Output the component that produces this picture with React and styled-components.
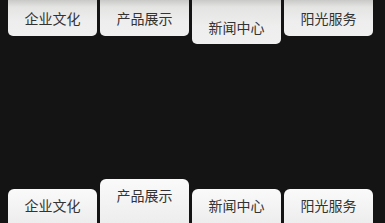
import React from 'react';
import styled, { createGlobalStyle } from 'styled-components';

const GlobalStyle = createGlobalStyle`
  html, body {
    margin: 0;
    padding: 0;
    background: #141414;
  }
`;

const Page = styled.div`
  height: 223px;
  display: flex;
  flex-direction: column;
  justify-content: space-between;
  overflow: hidden;
`;

const Bar = styled.div`
  display: flex;
  align-items: ${(p) => (p.$bottom ? 'flex-end' : 'flex-start')};
  gap: 3px;
  padding-left: 8px;
`;

const Tab = styled.div`
  width: 89px;
  box-sizing: border-box;
  display: flex;
  align-items: center;
  justify-content: center;
  font-family: "Noto Sans CJK SC", "Noto Sans", sans-serif;
  font-size: 14px;
  line-height: 16px;
  color: #333;
`;

const TopTab = styled(Tab)`
  height: ${(p) => (p.$active ? '44px' : '36px')};
  padding-top: ${(p) => (p.$active ? '11px' : '0')};
  padding-bottom: 1px;
  border-radius: 0 0 5px 5px;
  background: linear-gradient(#c9c9c7 0px, #e4e4e3 7px, #eeeeee 60%, #f0f0f0 100%);
`;

const BottomTab = styled(Tab)`
  height: ${(p) => (p.$active ? '44px' : '34px')};
  padding-bottom: ${(p) => (p.$active ? '12px' : '2px')};
  border-radius: 6px 6px 0 0;
  background: linear-gradient(#fafafa, #ededed);
`;

const tabs = ['企业文化', '产品展示', '新闻中心', '阳光服务'];

export default function App() {
  return (
    <>
      <GlobalStyle />
      <Page>
        <Bar>
          {tabs.map((t, i) => (
            <TopTab key={t} $active={i === 2}>{t}</TopTab>
          ))}
        </Bar>
        <Bar $bottom>
          {tabs.map((t, i) => (
            <BottomTab key={t} $active={i === 1}>{t}</BottomTab>
          ))}
        </Bar>
      </Page>
    </>
  );
}
